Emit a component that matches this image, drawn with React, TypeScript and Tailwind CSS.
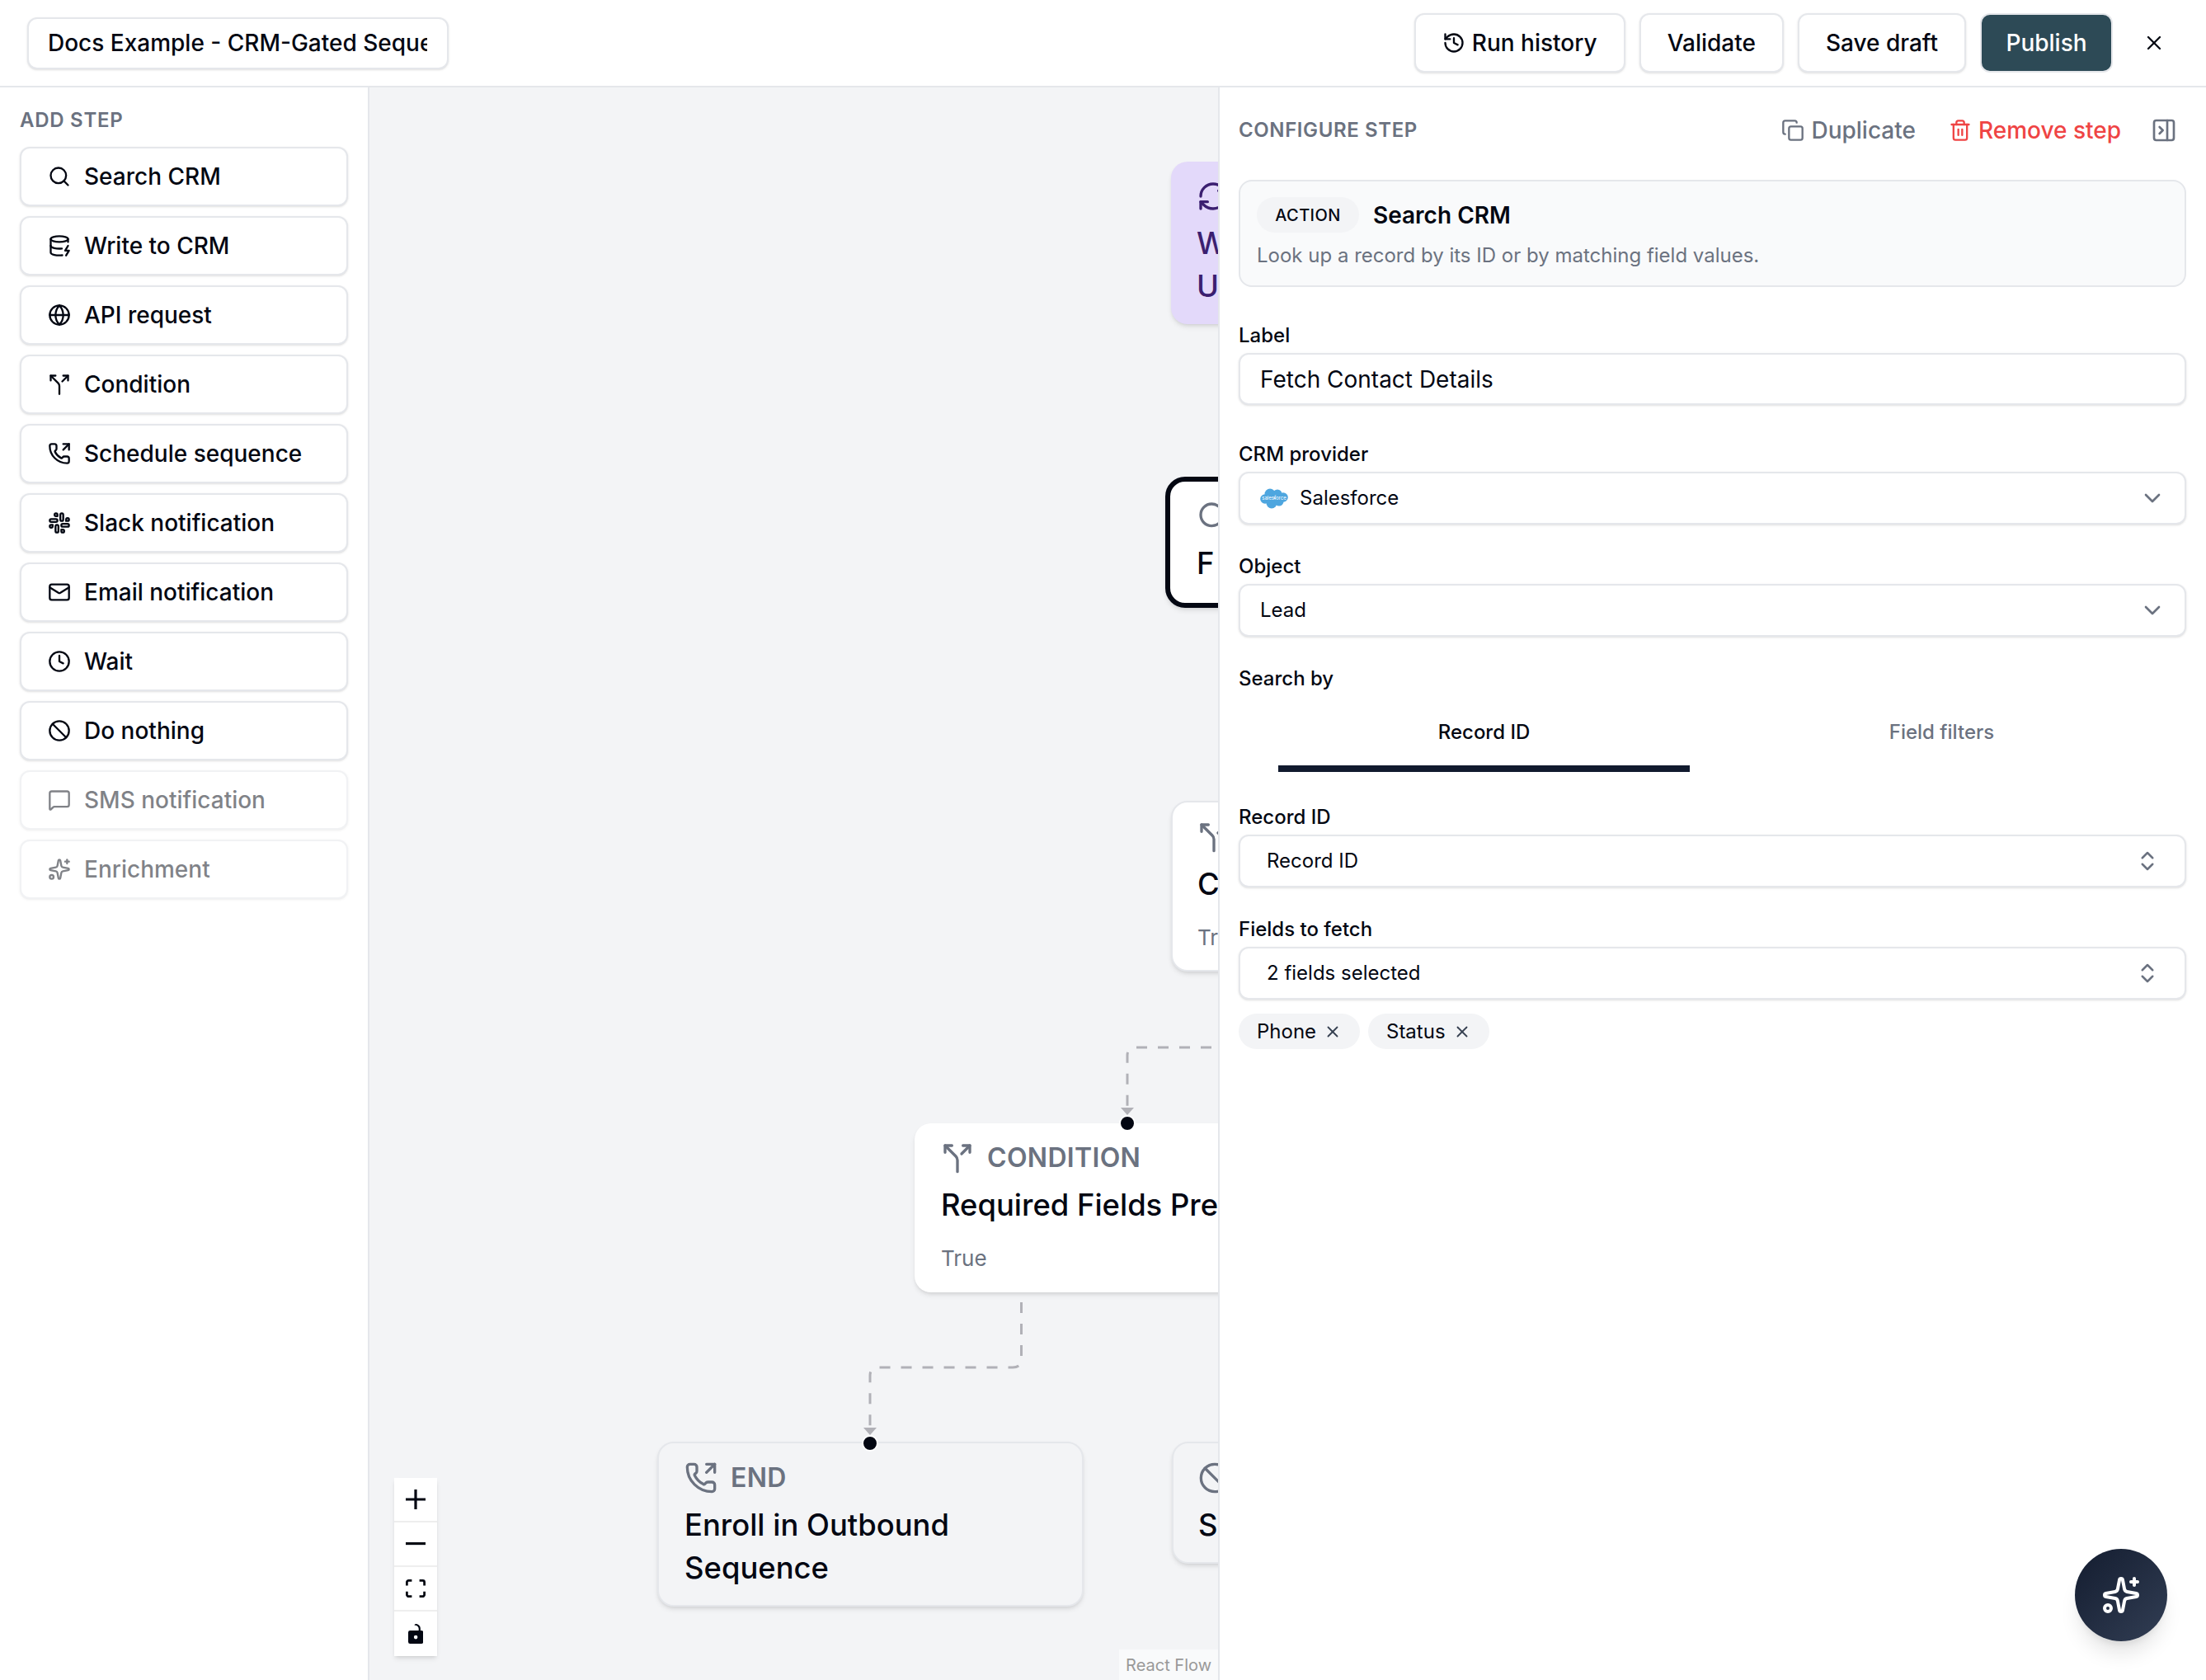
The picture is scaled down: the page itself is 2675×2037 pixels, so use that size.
import {
  Ban,
  ChevronDown,
  ChevronsUpDown,
  Clock,
  Copy,
  DatabaseZap,
  Globe,
  History,
  Mail,
  MessageSquare,
  PanelRightClose,
  PhoneOutgoing,
  RefreshCw,
  Search,
  Slack,
  Sparkles,
  Split,
  Trash2,
  X,
} from 'lucide-react'
import type { ReactNode } from 'react'

const steps = [
  { label: 'Search CRM', icon: Search },
  { label: 'Write to CRM', icon: DatabaseZap },
  { label: 'API request', icon: Globe },
  { label: 'Condition', icon: Split },
  { label: 'Schedule sequence', icon: PhoneOutgoing },
  { label: 'Slack notification', icon: Slack },
  { label: 'Email notification', icon: Mail },
  { label: 'Wait', icon: Clock },
  { label: 'Do nothing', icon: Ban },
  { label: 'SMS notification', icon: MessageSquare, disabled: true },
  { label: 'Enrichment', icon: Sparkles, disabled: true },
]

function HeaderButton({ children }: { children: ReactNode }) {
  return (
    <button className="h-[72px] px-[32px] flex items-center gap-[8px] bg-white border-2 border-[#e5e7eb] rounded-[12px] shadow-sm text-[28px] font-medium text-[#030712]">
      {children}
    </button>
  )
}

function Field({ label, className, children }: { label: string; className: string; children: ReactNode }) {
  return (
    <div className={className}>
      <div className="h-[32px] leading-[32px] text-[24px] font-medium text-[#030712]">{label}</div>
      <div className="mt-[5px]">{children}</div>
    </div>
  )
}

function SelectBox({ children, stepper }: { children: ReactNode; stepper?: boolean }) {
  return (
    <div
      className={`h-[64px] flex items-center justify-between bg-white border-2 border-[#e5e7eb] rounded-[12px] shadow-sm text-[24px] text-[#030712] ${
        stepper ? 'pl-[32px] pr-[30px]' : 'pl-[24px] pr-[23px]'
      }`}
    >
      {children}
      {stepper ? (
        <ChevronsUpDown size={30} className="text-[#6b7280]" />
      ) : (
        <ChevronDown size={32} className="text-[#6b7280]" />
      )}
    </div>
  )
}

function Chip({ label }: { label: string }) {
  return (
    <div className="h-[43px] w-[147px] pl-[22px] flex items-center gap-[9px] bg-[#f3f4f6] rounded-full text-[24px] text-[#030712]">
      {label}
      <X size={22} className="text-[#374151]" />
    </div>
  )
}

function CanvasNode({
  x,
  y,
  w,
  h,
  className,
  icon,
  label,
  title,
  sub,
}: {
  x: number
  y: number
  w: number
  h: number
  className: string
  icon: ReactNode
  label?: string
  title: ReactNode
  sub?: string
}) {
  return (
    <div
      className={`absolute rounded-[20px] shadow-md ${className}`}
      style={{ left: x - 448, top: y - 106, width: w, height: h }}
    >
      <div className="flex items-center gap-[16px] h-[40px]">
        {icon}
        {label && <span className="text-[32px] font-semibold text-[#6b7280] tracking-[0.01em]">{label}</span>}
      </div>
      <div className="mt-[11px] text-[36.4px] leading-[52px] font-medium whitespace-nowrap">{title}</div>
      {sub && <div className="mt-[19px] text-[26px] leading-[40px] text-[#6b7280]">{sub}</div>}
    </div>
  )
}

function Dot({ x, y }: { x: number; y: number }) {
  return (
    <div
      className="absolute w-[20px] h-[20px] rounded-full bg-[#030712] border-2 border-white"
      style={{ left: x - 448 - 10, top: y - 106 - 10 }}
    />
  )
}

function ControlButton({ children, last }: { children: ReactNode; last?: boolean }) {
  return (
    <div className={`w-[52px] h-[54px] flex items-center justify-center bg-white ${last ? '' : 'border-b-2 border-[#eeeeee]'}`}>
      {children}
    </div>
  )
}

export default function App() {
  return (
    <div className="w-[2675px] h-[2037px] flex flex-col overflow-hidden bg-white text-[#030712] [font-family:Inter,sans-serif]">
      {/* Top bar */}
      <header className="h-[106px] shrink-0 flex items-center justify-between pl-[33px] pr-[35px] border-b-2 border-[#e5e7eb]">
        <div className="w-[511px] h-[63px] pl-[23px] flex items-center bg-white border-2 border-[#e5e7eb] rounded-[12px] shadow-sm">
          <div className="w-[460px] overflow-hidden whitespace-nowrap text-[28px] font-medium text-[#030712]">
            Docs Example - CRM-Gated Sequence
          </div>
        </div>
        <div className="flex items-center gap-[17px]">
          <HeaderButton>
            <History size={28} />
            Run history
          </HeaderButton>
          <HeaderButton>Validate</HeaderButton>
          <HeaderButton>Save draft</HeaderButton>
          <button className="h-[72px] w-[161px] bg-[#2d4a56] border-2 border-[#e5e7eb] rounded-[12px] text-[28px] font-medium text-white">
            Publish
          </button>
          <button className="ml-[5px] w-[56px] h-[56px] flex items-center justify-center text-[#030712]">
            <X size={28} />
          </button>
        </div>
      </header>

      <div className="flex-1 flex min-h-0">
        {/* Step palette */}
        <aside className="w-[448px] shrink-0 border-r-2 border-[#e5e7eb] pl-[24px] pr-[24px] pt-[24px]">
          <div className="h-[32px] leading-[32px] text-[24px] font-semibold tracking-[0.03em] text-[#6b7280]">ADD STEP</div>
          <div className="mt-[16px] flex flex-col gap-[12px]">
            {steps.map((step) => (
              <button
                key={step.label}
                className={`h-[72px] pl-[32px] flex items-center gap-[16px] bg-white border-2 border-[#e5e7eb] rounded-[12px] shadow-sm text-[28px] font-medium text-[#030712] ${
                  step.disabled ? 'opacity-50' : ''
                }`}
              >
                <step.icon size={28} />
                {step.label}
              </button>
            ))}
          </div>
        </aside>

        {/* Flow canvas */}
        <main className="relative flex-1 min-w-0 overflow-hidden bg-[#f3f4f6]">
          <svg className="absolute inset-0 w-full h-full" viewBox="448 106 1029 1931" fill="none">
            <path
              d="M1495 1270 L1377 1270 Q1367 1270 1367 1280 L1367 1345"
              stroke="#b1b1b7"
              strokeWidth="3"
              strokeDasharray="13 13"
            />
            <polygon points="1359,1343 1375,1343 1367,1352" fill="#b1b1b7" />
            <path
              d="M1238.5 1579 L1238.5 1648 Q1238.5 1658 1228 1658 L1065 1658 Q1055 1658 1055 1668 L1055 1733"
              stroke="#b1b1b7"
              strokeWidth="3"
              strokeDasharray="13 13"
            />
            <polygon points="1047,1731 1063,1731 1055,1740" fill="#b1b1b7" />
          </svg>

          <CanvasNode
            x={1420}
            y={196}
            w={515}
            h={197}
            className="bg-[#e3d9fa] text-[#3b1f70] pl-[31px] pt-[22px]"
            icon={<RefreshCw size={40} />}
            title={
              <>
                W
                <br />U
              </>
            }
          />
          <CanvasNode
            x={1413}
            y={578}
            w={515}
            h={159}
            className="bg-white border-[6px] border-[#030712] rounded-[24px] pl-[32px] pt-[22px]"
            icon={<Search size={40} className="text-[#6b7280]" />}
            title="F"
          />
          <CanvasNode
            x={1420}
            y={971}
            w={515}
            h={207}
            className="bg-white border-2 border-[#e5e7eb] pl-[30px] pt-[22px]"
            icon={<Split size={40} className="text-[#6b7280]" />}
            title="C"
            sub="Tr"
          />
          <CanvasNode
            x={1109}
            y={1362}
            w={516}
            h={205}
            className="bg-white pl-[32px] pt-[22px]"
            icon={<Split size={40} className="text-[#6b7280]" />}
            label="CONDITION"
            title="Required Fields Pre"
            sub="True"
          />
          <CanvasNode
            x={797}
            y={1748}
            w={517}
            h={200}
            className="bg-[#f3f4f6] border-2 border-[#e5e7eb] pl-[31px] pt-[22px]"
            icon={<PhoneOutgoing size={40} className="text-[#6b7280]" />}
            label="END"
            title={
              <>
                Enroll in Outbound
                <br />
                Sequence
              </>
            }
          />
          <CanvasNode
            x={1421}
            y={1748}
            w={515}
            h={148}
            className="bg-[#f3f4f6] border-2 border-[#e5e7eb] pl-[30px] pt-[22px]"
            icon={<Ban size={40} className="text-[#6b7280]" />}
            title="S"
          />

          <Dot x={1367} y={1362} />
          <Dot x={1055} y={1750} />

          {/* Zoom controls */}
          <div className="absolute left-[30px] bottom-[29px] shadow-md">
            <ControlButton>
              <svg viewBox="0 0 32 32" className="w-[24px] h-[24px]" fill="#030712">
                <path d="M32 18.133H18.133V32h-4.266V18.133H0v-4.266h13.867V0h4.266v13.867H32z" />
              </svg>
            </ControlButton>
            <ControlButton>
              <svg viewBox="0 0 32 5" className="w-[24px]" fill="#030712">
                <path d="M0 0h32v4.2H0z" />
              </svg>
            </ControlButton>
            <ControlButton>
              <svg viewBox="0 0 32 30" className="w-[24px]" fill="#030712">
                <path d="M3.692 4.63c0-.53.4-.938.939-.938h5.215V0H4.708C2.13 0 0 2.054 0 4.63v5.216h3.692V4.631zM27.354 0h-5.2v3.692h5.17c.53 0 .984.4.984.939v5.215H32V4.631A4.624 4.624 0 0027.354 0zm.954 24.83c0 .532-.4.94-.939.94h-5.215v3.768h5.215c2.577 0 4.631-2.13 4.631-4.707v-5.139h-3.692v5.139zm-23.677.94c-.531 0-.939-.4-.939-.94v-5.138H0v5.139c0 2.577 2.13 4.707 4.708 4.707h5.138V25.77H4.631z" />
              </svg>
            </ControlButton>
            <ControlButton last>
              <svg viewBox="0 0 25 32" className="h-[24px]" fill="#030712">
                <path d="M21.333 10.667H19.81V7.619C19.81 3.429 16.38 0 12.19 0c-4.114 1.828-1.37 2.133.305 2.438 1.676.305 4.42 2.59 4.42 5.181v3.048H3.047A3.056 3.056 0 000 13.714v15.238A3.056 3.056 0 003.048 32h18.285a3.056 3.056 0 003.048-3.048V13.714a3.056 3.056 0 00-3.048-3.047zM12.19 24.533a3.056 3.056 0 01-3.047-3.047 3.056 3.056 0 013.047-3.048 3.056 3.056 0 013.048 3.048 3.056 3.056 0 01-3.048 3.047z" />
              </svg>
            </ControlButton>
          </div>

          <div className="absolute right-0 bottom-0 h-[37px] px-[8px] flex items-center bg-white/50 text-[20px] text-[#999999]">
            React Flow
          </div>
        </main>

        {/* Configure panel */}
        <section className="relative w-[1198px] shrink-0 border-l-2 border-[#e5e7eb] bg-white pl-[23px] pr-[24px] pt-[34px]">
          <div className="h-[36px] flex items-center justify-between">
            <div className="text-[24px] font-semibold tracking-[0.025em] text-[#6b7280]">CONFIGURE STEP</div>
            <div className="flex items-center pr-[11px]">
              <button className="flex items-center gap-[8px] text-[28px] font-medium text-[#6b7280]">
                <Copy size={28} />
                Duplicate
              </button>
              <button className="ml-[40px] flex items-center gap-[8px] text-[28px] font-medium text-[#ef4444]">
                <Trash2 size={28} />
                Remove step
              </button>
              <button className="ml-[36px] text-[#6b7280]">
                <PanelRightClose size={32} />
              </button>
            </div>
          </div>

          <div className="mt-[42px] h-[130px] pl-[20px] pt-[19px] bg-[#f9fafb] border-2 border-[#e5e7eb] rounded-[16px]">
            <div className="flex items-center gap-[17px]">
              <span className="w-[124px] h-[43px] flex items-center justify-center bg-[#f3f4f6] rounded-full text-[20px] font-medium tracking-[0.02em] text-[#030712]">
                ACTION
              </span>
              <span className="text-[28px] font-semibold text-[#030712]">Search CRM</span>
            </div>
            <p className="mt-[12px] text-[24px] leading-[32px] text-[#6b7280]">
              Look up a record by its ID or by matching field values.
            </p>
          </div>

          <Field label="Label" className="mt-[43px]">
            <div className="h-[63px] pl-[24px] flex items-center bg-white border-2 border-[#e5e7eb] rounded-[12px] shadow-sm text-[28px] text-[#030712]">
              Fetch Contact Details
            </div>
          </Field>

          <Field label="CRM provider" className="mt-[44px]">
            <SelectBox>
              <span className="flex items-center gap-[14px]">
                <svg viewBox="0 0 34 26" className="w-[34px] h-[26px]">
                  <g fill="#4ea6df">
                    <circle cx="12" cy="8" r="6.5" />
                    <circle cx="21" cy="8" r="5.5" />
                    <circle cx="28" cy="12" r="5.8" />
                    <circle cx="6" cy="14" r="5.8" />
                    <circle cx="14" cy="19" r="6.5" />
                    <circle cx="23" cy="17" r="5.5" />
                  </g>
                  <text x="17" y="15" textAnchor="middle" fontSize="6" fill="#ffffff">
                    salesforce
                  </text>
                </svg>
                Salesforce
              </span>
            </SelectBox>
          </Field>

          <Field label="Object" className="mt-[35px]">
            <SelectBox>Lead</SelectBox>
          </Field>

          <div className="mt-[35px] h-[32px] leading-[32px] text-[24px] font-medium text-[#030712]">Search by</div>

          {/* Tabs */}
          <div className="grid grid-cols-2 pl-[20px] pr-[19px]">
            <div className="flex flex-col items-stretch">
              <div className="h-[89px] pt-[29px] text-center text-[24px] leading-[40px] font-medium text-[#030712]">Record ID</div>
              <div className="mx-[28px] h-[8px] bg-[#111a2e]" />
            </div>
            <div className="h-[89px] pt-[29px] text-center text-[24px] leading-[40px] font-medium text-[#6b7280]">Field filters</div>
          </div>

          <Field label="Record ID" className="mt-[39px]">
            <SelectBox stepper>Record ID</SelectBox>
          </Field>

          <Field label="Fields to fetch" className="mt-[35px]">
            <SelectBox stepper>2 fields selected</SelectBox>
          </Field>

          <div className="mt-[17px] flex gap-[10px]">
            <Chip label="Phone" />
            <Chip label="Status" />
          </div>

          <button className="absolute right-[47px] bottom-[47px] w-[112px] h-[112px] flex items-center justify-center rounded-full bg-gradient-to-br from-[#141d30] to-[#323e54] shadow-xl text-white">
            <Sparkles size={48} />
          </button>
        </section>
      </div>
    </div>
  )
}
